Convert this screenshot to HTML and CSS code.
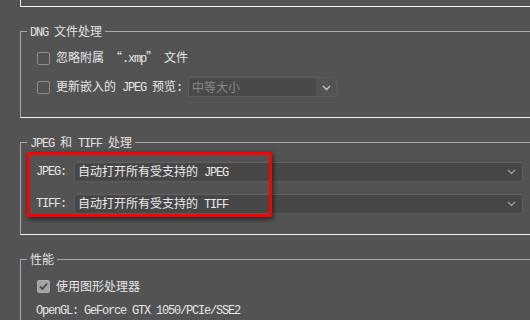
FILE: index.html
```html
<!DOCTYPE html>
<html lang="zh-CN">
<head>
<meta charset="utf-8">
<title>首选项</title>
<link rel="stylesheet" href="styles.css">
</head>
<body>
<div class="prev-group"></div>

<fieldset class="group">
  <legend><span class="en">DNG </span>文件处理</legend>
  <div class="rows dng-rows">
    <div class="row">
      <span class="checkbox"></span>
      <span class="label">忽略附属<span class="en"> </span>“<span class="en">.xmp</span>”<span class="en"> </span>文件</span>
    </div>
    <div class="row">
      <span class="checkbox"></span>
      <span class="label">更新嵌入的<span class="en"> JPEG </span>预览<span class="en">:</span></span>
      <div class="mini-select">
        <span class="mini-value">中等大小</span>
        <span class="mini-arrow"><svg width="9" height="6" viewBox="0 0 9 6"><polyline points="1,1 4.5,4.5 8,1" fill="none" stroke="#c8c8c8" stroke-width="1.3"/></svg></span>
      </div>
    </div>
  </div>
</fieldset>

<fieldset class="group">
  <legend><span class="en">JPEG </span>和<span class="en"> TIFF </span>处理</legend>
  <div class="rows format-rows">
    <div class="row">
      <span class="field-label en">JPEG:</span>
      <div class="select">
        <span class="select-value">自动打开所有受支持的<span class="en"> JPEG</span></span>
        <svg class="chev" width="9" height="6" viewBox="0 0 9 6"><polyline points="1,1 4.5,4.5 8,1" fill="none" stroke="#a8a8a8" stroke-width="1.2"/></svg>
      </div>
    </div>
    <div class="row">
      <span class="field-label en">TIFF:</span>
      <div class="select">
        <span class="select-value">自动打开所有受支持的<span class="en"> TIFF</span></span>
        <svg class="chev" width="9" height="6" viewBox="0 0 9 6"><polyline points="1,1 4.5,4.5 8,1" fill="none" stroke="#a8a8a8" stroke-width="1.2"/></svg>
      </div>
    </div>
    <div class="highlight"></div>
  </div>
</fieldset>

<fieldset class="group">
  <legend>性能</legend>
  <div class="rows perf-rows">
    <div class="row">
      <span class="checkbox checked"><svg width="11" height="11" viewBox="0 0 11 11"><polyline points="2,5.5 4.5,8 9,2.5" fill="none" stroke="#4a4a4a" stroke-width="1.8"/></svg></span>
      <span class="label">使用图形处理器</span>
    </div>
    <div class="row info">
      <span class="en">OpenGL: GeForce GTX 1050/PCIe/SSE2</span>
    </div>
  </div>
</fieldset>
</body>
</html>
```

FILE: styles.css
```css
* { box-sizing: border-box; }

html, body { margin: 0; padding: 0; }

body {
  width: 530px;
  height: 320px;
  overflow: hidden;
  background: #535353;
  color: #e6e6e6;
  font-family: "Noto Sans CJK SC", "Noto Sans", sans-serif;
  font-size: 12px;
  line-height: 14px;
}

.en {
  font-family: "Liberation Mono", "DejaVu Sans Mono", monospace;
  letter-spacing: -1.2px;
  white-space: pre;
}

.prev-group {
  margin-left: 20px;
  height: 7px;
  border-left: 1px solid #e8e8e8;
  border-bottom: 1px solid #f2f2f2;
}

.group {
  margin: 17px 0 0 20px;
  padding: 0 0 20px 6px;
  min-width: 0;
  border: 0;
  border-top: 1px solid #a9a9a9;
  border-left: 1px solid #a9a9a9;
  border-bottom: 1px solid #f2f2f2;
}

.group legend {
  padding: 0 3px;
  height: 14px;
  line-height: 14px;
  color: #e2e2e2;
}

.rows {
  display: flex;
  flex-direction: column;
}

.row {
  height: 20px;
  display: flex;
  align-items: center;
}

.dng-rows {
  margin-top: 10px;
  padding-left: 10px;
  gap: 9px;
}

.checkbox {
  width: 13px;
  height: 13px;
  flex: none;
  margin-right: 6px;
  border: 1px solid #8e8e8e;
  border-radius: 2px;
  background: #525252;
  display: flex;
  align-items: center;
  justify-content: center;
}

.checkbox.checked {
  background: #a2a2a2;
  border-color: #acacac;
}

.label { white-space: nowrap; }

.mini-select {
  margin-left: 6px;
  width: 149px;
  height: 20px;
  display: flex;
  border: 1px solid #5f5f5f;
  border-radius: 3px;
  overflow: hidden;
}

.mini-value {
  width: 127px;
  background: #494949;
  color: #8a8a8a;
  padding-left: 3px;
  display: flex;
  align-items: center;
}

.mini-arrow {
  flex: 1;
  display: flex;
  align-items: center;
  justify-content: center;
  padding-top: 1px;
}

.format-rows {
  position: relative;
  margin-top: 13px;
  gap: 12px;
}

.format-rows .row { padding-left: 9px; }

.field-label {
  width: 38px;
  flex: none;
  color: #e6e6e6;
}

.select {
  flex: 1;
  height: 20px;
  margin-right: 7px;
  display: flex;
  align-items: center;
  justify-content: space-between;
  background: #474747;
  border: 1px solid #5c5c5c;
  border-top-color: #616161;
  border-radius: 2px;
  padding: 0 6px 0 3px;
  color: #ececec;
}

.chev { flex: none; }

.highlight {
  position: absolute;
  left: 0;
  top: -10px;
  bottom: -3px;
  width: 245px;
  border: 3px solid #ff0000;
  box-shadow: 1px 2px 5px rgba(0, 0, 0, 0.6);
  pointer-events: none;
}

.perf-rows {
  margin-top: 10px;
  padding-left: 10px;
  gap: 5px;
}

.perf-rows .info {
  margin-left: -1px;
  color: #e6e6e6;
}
```
